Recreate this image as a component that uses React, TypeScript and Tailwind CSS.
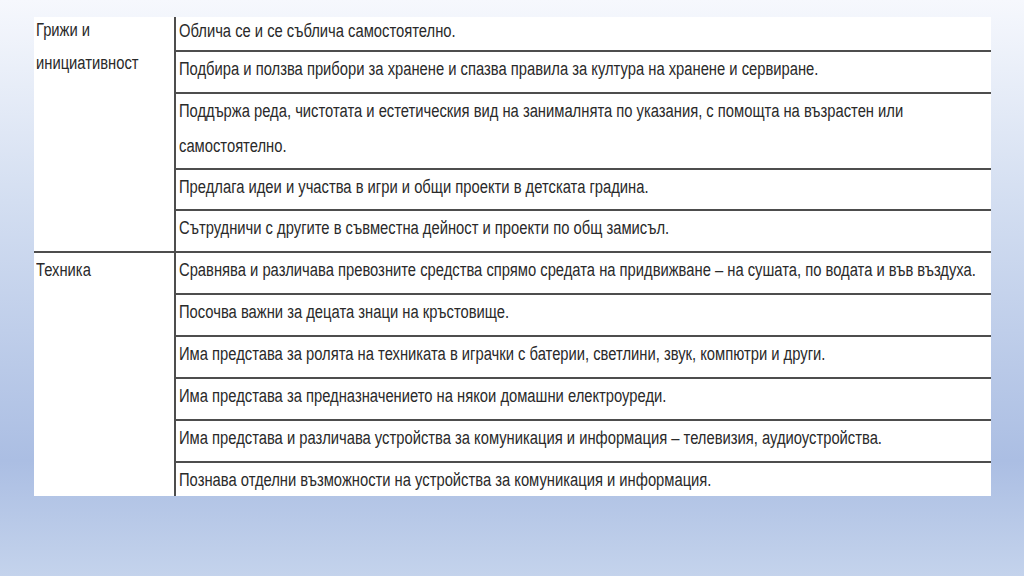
const groups = [
  {
    title: ["Грижи и", "инициативност"],
    rows: [
      ["Облича се и се съблича самостоятелно."],
      ["Подбира и ползва прибори за хранене и спазва правила за култура на хранене и сервиране."],
      [
        "Поддържа реда, чистотата и естетическия вид на занималнята по указания, с помощта на възрастен или",
        "самостоятелно.",
      ],
      ["Предлага идеи и участва в игри и общи проекти в детската градина."],
      ["Сътрудничи с другите в съвместна дейност и проекти по общ замисъл."],
    ],
  },
  {
    title: ["Техника"],
    rows: [
      ["Сравнява и различава превозните средства спрямо средата на придвижване – на сушата, по водата и във въздуха."],
      ["Посочва важни за децата знаци на кръстовище."],
      ["Има представа за ролята на техниката в играчки с батерии, светлини, звук, компютри и други."],
      ["Има представа за предназначението на някои домашни електроуреди."],
      ["Има представа и различава устройства за комуникация и информация – телевизия, аудиоустройства."],
      ["Познава отделни възможности на устройства за комуникация и информация."],
    ],
  },
];

function Line({ text }: { text: string }) {
  return (
    <div className="h-[35px] whitespace-nowrap">
      <span className="inline-block origin-left scale-x-[0.82]">{text}</span>
    </div>
  );
}

export default function App() {
  return (
    <div className="h-[576px] w-[1024px] overflow-hidden bg-[linear-gradient(180deg,#f6f8fd_0%,#d3def1_35%,#abbee3_80%,#c4d3ec_100%)] pt-[17px] pl-[34px]">
      <div
        className="flex h-[479px] w-[957px] flex-col overflow-hidden bg-white text-[18px] text-[#2a2a2a]"
        style={{ fontFamily: '"Liberation Sans", Arial, sans-serif' }}
      >
        {groups.map((g, gi) => (
          <div key={gi} className={`flex ${gi > 0 ? "border-t-2 border-[#4d4d4d]" : ""}`}>
            <div className={`w-[140px] shrink-0 pl-[2px] leading-[33px] ${gi === 0 ? "-mt-[3px]" : "pt-[1px]"}`}>
              {g.title.map((t) => (
                <div key={t} className="whitespace-nowrap">
                  <span className="inline-block origin-left scale-x-[0.82]">{t}</span>
                </div>
              ))}
            </div>
            <div className="flex-1 border-l-2 border-[#4d4d4d]">
              {g.rows.map((r, ri) => {
                const pad = gi === 0 && (ri === 2 || ri === 3) ? "pb-[4px]" : "pb-[5px]";
                return (
                  <div
                    key={ri}
                    className={`pl-[3px] leading-[35px] ${
                      ri > 0 ? `border-t-2 border-[#4d4d4d] ${pad}` : gi === 0 ? "-mt-[3px] pb-[1px]" : pad
                    }`}
                  >
                    {r.map((line) => (
                      <Line key={line} text={line} />
                    ))}
                  </div>
                );
              })}
            </div>
          </div>
        ))}
      </div>
    </div>
  );
}
